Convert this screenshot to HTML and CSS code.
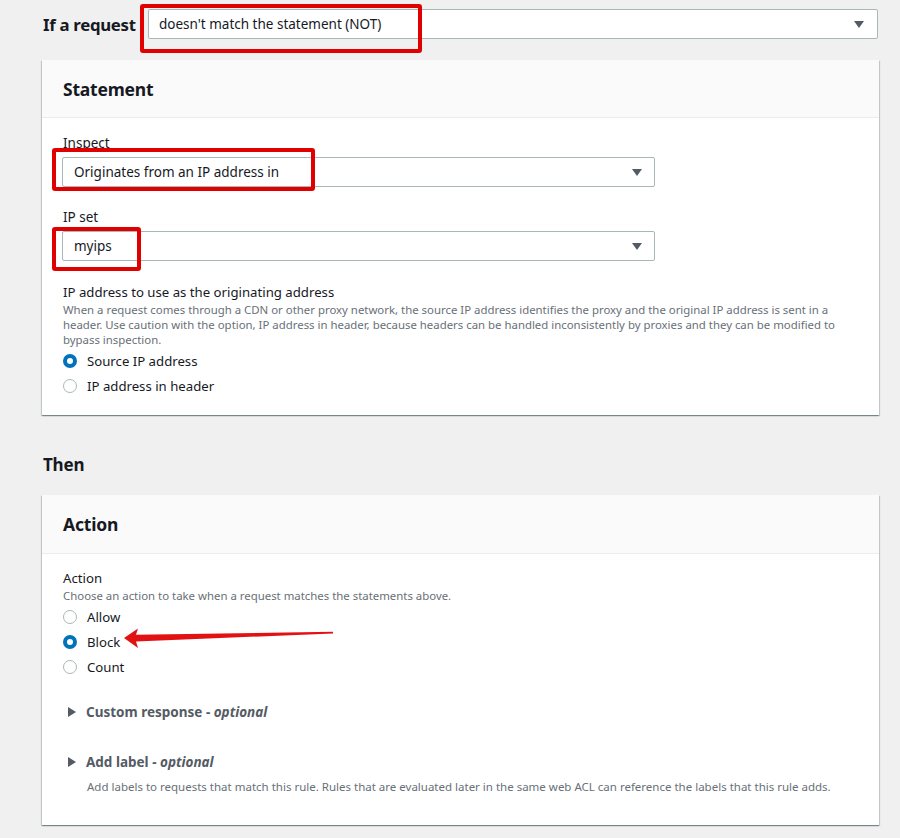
FILE: index.html
```html
<!DOCTYPE html>
<html>
<head>
<meta charset="utf-8">
<link rel="stylesheet" href="styles.css">
</head>
<body>
<div class="page">
  <div class="if-row">
    <span class="if-label">If a request</span>
    <div class="select select-wide">
      <span>doesn't match the statement (NOT)</span>
      <span class="caret"></span>
    </div>
  </div>

  <section class="card card-statement">
    <header class="card-head"><h2>Statement</h2></header>
    <div class="card-body">
      <div class="field">
        <div class="label">Inspect</div>
        <div class="select select-mid"><span>Originates from an IP address in</span><span class="caret"></span></div>
      </div>
      <div class="field">
        <div class="label">IP set</div>
        <div class="select select-mid"><span>myips</span><span class="caret"></span></div>
      </div>
      <div class="field field-radio">
        <div class="label">IP address to use as the originating address</div>
        <div class="desc">When a request comes through a CDN or other proxy network, the source IP address identifies the proxy and the original IP address is sent in a header. Use caution with the option, IP address in header, because headers can be handled inconsistently by proxies and they can be modified to bypass inspection.</div>
        <div class="radios">
          <div class="radio"><span class="dot on"></span><span>Source IP address</span></div>
          <div class="radio"><span class="dot"></span><span>IP address in header</span></div>
        </div>
      </div>
    </div>
  </section>

  <h3 class="then">Then</h3>

  <section class="card card-action">
    <header class="card-head"><h2>Action</h2></header>
    <div class="card-body">
      <div class="field field-radio">
        <div class="label">Action</div>
        <div class="desc">Choose an action to take when a request matches the statements above.</div>
        <div class="radios">
          <div class="radio"><span class="dot"></span><span>Allow</span></div>
          <div class="radio"><span class="dot on"></span><span>Block</span></div>
          <div class="radio"><span class="dot"></span><span>Count</span></div>
        </div>
      </div>
      <div class="expand expand-first"><span class="tri"></span><span class="exp-title">Custom response - <em>optional</em></span></div>
      <div class="expand"><span class="tri"></span><span class="exp-title">Add label - <em>optional</em></span></div>
      <div class="desc exp-desc">Add labels to requests that match this rule. Rules that are evaluated later in the same web ACL can reference the labels that this rule adds.</div>
    </div>
  </section>

  <div class="hl hl-1"></div>
  <div class="hl hl-2"></div>
  <div class="hl hl-3"></div>
  <svg class="arrow" width="230" height="34" viewBox="0 0 230 34">
    <path d="M2 16 L16 6.5 L14 12.8 L211 9.8 L211 11.4 L14 19.6 L16 26 Z" fill="#e31212"/>
  </svg>
</div>
</body>
</html>
```

FILE: styles.css
```css
* { box-sizing: border-box; }
html, body { margin: 0; padding: 0; }
body {
  background: #f0f0f0;
  font-family: "Noto Sans", "Open Sans", sans-serif;
  color: #16191f;
  width: 900px;
  height: 838px;
  overflow: hidden;
}
.page {
  position: relative;
  padding: 9px 21px 0 42px;
}
.if-row {
  display: flex;
  align-items: center;
  gap: 10px;
  height: 30px;
}
.if-label {
  font-weight: 700;
  font-size: 16.8px;
  padding-left: 1px;
  width: 96px;
  flex-shrink: 0;
  white-space: nowrap;
  letter-spacing: -0.3px;
}
.select {
  display: flex;
  align-items: center;
  justify-content: space-between;
  height: 30px;
  background: #fff;
  border: 1px solid #aab7b8;
  border-radius: 2px;
  padding: 0 12px 0 10px;
  font-size: 13.5px;
}
.select-wide { width: 730px; padding-right: 13px; }
.select-mid { width: 593px; padding-left: 11px; }
.caret {
  width: 0; height: 0;
  border-left: 5.5px solid transparent;
  border-right: 5.5px solid transparent;
  border-top: 7px solid #545b64;
}
.card {
  background: #fff;
  width: 837px;
  box-shadow: 0 1px 1px 0 rgba(0,28,36,.3), 1px 1px 1px 0 rgba(0,28,36,.15), -1px 1px 1px 0 rgba(0,28,36,.15);
}
.card-statement { margin-top: 21px; }
.card-head {
  background: #fafafa;
  border-bottom: 1px solid #eaeded;
  height: 58px;
  display: flex;
  align-items: center;
  padding-left: 21px;
}
.card-head h2 {
  margin: 0;
  font-size: 17.5px;
  font-weight: 700;
  letter-spacing: -0.2px;
}
.card-body {
  padding: 15px 20px 17px 20px;
}
.field { display: flex; flex-direction: column; }
.field + .field { margin-top: 20px; }
.field .label {
  font-size: 13.5px;
  line-height: 20px;
  margin-bottom: 4px;
  padding-left: 1px;
}
.field-radio .label { margin-bottom: 0; font-size: 13.2px; }
.field + .field-radio { margin-top: 21px; }
.desc {
  font-size: 11.4px;
  line-height: 15px;
  color: #687078;
  padding-left: 1px;
}
.radios { display: flex; flex-direction: column; margin-top: 1px; }
.radio {
  display: flex;
  align-items: center;
  gap: 10px;
  height: 25px;
  font-size: 13.2px;
}
.dot {
  width: 14px; height: 14px;
  border-radius: 50%;
  border: 1px solid #aab7b8;
  background: #fff;
  margin-left: 1px;
}
.dot.on { border: 4px solid #0073bb; }
.then {
  margin: 38px 0 0 1px;
  font-size: 17px;
  font-weight: 700;
  line-height: 24px;
  letter-spacing: -0.2px;
}
.card-action { margin-top: 18px; }
.card-action .card-head { height: 59px; }
.card-action .card-body { padding-top: 14px; padding-bottom: 31px; }
.expand {
  display: flex;
  align-items: center;
  gap: 10px;
  height: 24px;
  padding-left: 6px;
  font-size: 13.5px;
  font-weight: 700;
  color: #545b64;
  margin-top: 26px;
}
.expand-first { margin-top: 21px; }
.tri {
  width: 0; height: 0;
  border-top: 5px solid transparent;
  border-bottom: 5px solid transparent;
  border-left: 8px solid #545b64;
}
.exp-title em { font-style: italic; }
.exp-desc { padding-left: 25px; margin-top: 5px; font-size: 11.5px; }
.hl {
  position: absolute;
  border: 4px solid #e00000;
  border-radius: 3px;
}
.hl-1 { left: 140px; top: 4px; width: 282px; height: 49px; }
.hl-2 { left: 52px; top: 148px; width: 263px; height: 43px; }
.hl-3 { left: 52px; top: 227px; width: 89px; height: 44px; }
.arrow { position: absolute; left: 122px; top: 622px; }
```
